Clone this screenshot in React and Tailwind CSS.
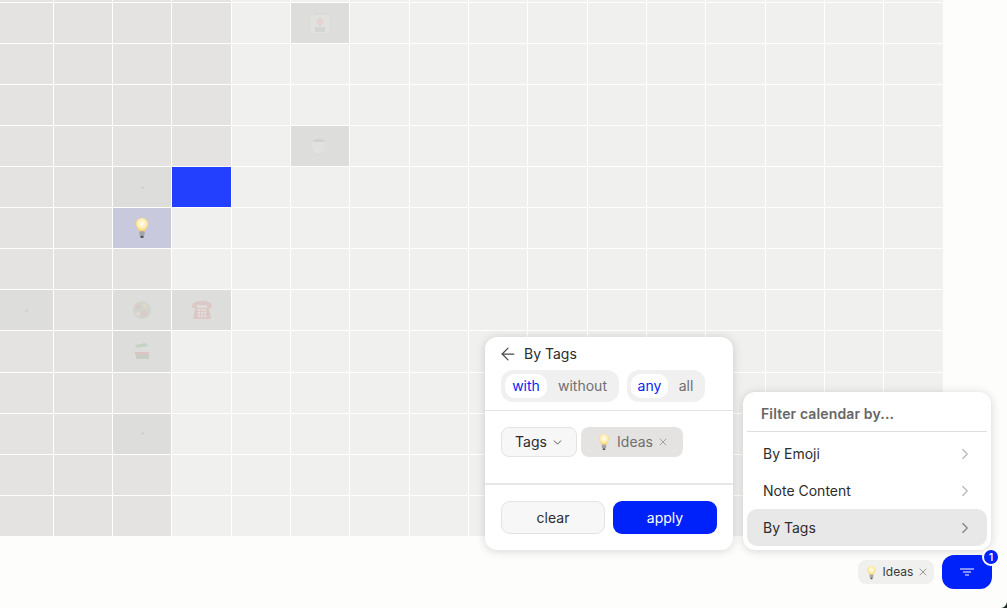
import React from 'react';
import { ArrowLeft, ChevronDown, ChevronRight, X } from 'lucide-react';

const BLANK = 0, DARK = 1, MARK = 2, BLUE = 3, BULB = 4;

const Bulb = ({ size = 20, className = '' }) => (
  <svg width={size} height={size} viewBox="0 0 20 20" className={className}>
    <defs>
      <radialGradient id="bulbGlow" cx="50%" cy="42%" r="55%">
        <stop offset="0%" stopColor="#fffdf0" />
        <stop offset="60%" stopColor="#fff0b8" />
        <stop offset="100%" stopColor="#f6cf6e" />
      </radialGradient>
    </defs>
    <path d="M10 1c-3.2 0-5.6 2.4-5.6 5.4 0 2.5 1.9 3.8 2.7 6.6h5.8c.8-2.8 2.7-4.1 2.7-6.6C15.600 3.400 13.200 1 10 1z" fill="url(#bulbGlow)" />
    <rect x="7.600" y="13" width="4.800" height="4" rx="0.800" fill="#a3a3a8" />
    <rect x="8.600" y="17" width="2.800" height="2" rx="0.600" fill="#55555c" />
  </svg>
);

const Kit = () => (
  <svg width="20" height="22" viewBox="0 0 20 22">
    <rect x="1" y="3" width="18" height="18" fill="#e1e1df" />
    <rect x="4" y="1" width="12" height="2" fill="#dadad8" />
    <path d="M8.500 6h3v2.500H14v3h-2.500V14h-3v-2.500H6v-3h2.500z" fill="#e6d2d1" />
    <rect x="5" y="15" width="10" height="5" fill="#d4d4d2" />
  </svg>
);

const Cup = () => (
  <svg width="20" height="16" viewBox="0 0 20 16">
    <ellipse cx="9" cy="3" rx="6" ry="2" fill="#d2d2d0" />
    <path d="M2 4h14v5c0 3-3 6-7 6s-7-3-7-6z" fill="#e1e1df" />
    <circle cx="16" cy="8" r="3" fill="#dfdfdd" />
  </svg>
);

const Dot = () => <span className="block size-[3px] rounded-full bg-[#d0d0ce]" />;

const Ball = () => (
  <svg width="20" height="20" viewBox="0 0 20 20" className="opacity-[0.14]">
    <circle cx="10" cy="10" r="9" fill="#8fa672" />
    <circle cx="6" cy="7" r="2.500" fill="#c9615c" />
    <circle cx="13" cy="6" r="2" fill="#e3c15a" />
    <circle cx="12" cy="13" r="3" fill="#c9615c" />
    <circle cx="6" cy="14" r="2" fill="#ded8c8" />
  </svg>
);

const Phone = () => (
  <svg width="22" height="22" viewBox="0 0 22 22" className="opacity-[0.14]">
    <path d="M1 7c0-3 4-5 10-5s10 2 10 5v2h-5V6H6v3H1z" fill="#d9534f" />
    <path d="M4 9h14l2 11H2z" fill="#d9534f" />
    <g fill="#f2f2f0">
      <rect x="7" y="10" width="2" height="2" /><rect x="10" y="10" width="2" height="2" /><rect x="13" y="10" width="2" height="2" />
      <rect x="7" y="13" width="2" height="2" /><rect x="10" y="13" width="2" height="2" /><rect x="13" y="13" width="2" height="2" />
      <rect x="7" y="16" width="2" height="2" /><rect x="10" y="16" width="2" height="2" /><rect x="13" y="16" width="2" height="2" />
    </g>
  </svg>
);

const Books = () => (
  <svg width="18" height="18" viewBox="0 0 18 18" className="opacity-[0.18]">
    <path d="M2 3l11-2 2 3L4 6z" fill="#5fa35f" />
    <path d="M2 7l13-1v3L3 10z" fill="#d9dbd6" />
    <rect x="2" y="10" width="14" height="3" fill="#c9615c" />
    <rect x="3" y="13" width="13" height="4" fill="#6d8f5f" />
  </svg>
);

// one row = one line of the calendar, col -> [kind, emoji]
const rows = [
  { 0: [DARK], 1: [DARK], 2: [DARK], 3: [DARK] },
  { 0: [DARK], 1: [DARK], 2: [DARK], 3: [DARK], 5: [MARK, <Kit />] },
  { 0: [DARK], 1: [DARK], 2: [DARK], 3: [DARK] },
  { 0: [DARK], 1: [DARK], 2: [DARK], 3: [DARK] },
  { 0: [DARK], 1: [DARK], 2: [DARK], 3: [DARK], 5: [MARK, <Cup />] },
  { 0: [DARK], 1: [DARK], 2: [MARK, <Dot />], 3: [BLUE] },
  { 0: [DARK], 1: [DARK], 2: [BULB, <Bulb size={22} />] },
  { 0: [DARK], 1: [DARK], 2: [DARK] },
  { 0: [MARK, <Dot />], 1: [DARK], 2: [MARK, <Ball />], 3: [MARK, <Phone />] },
  { 0: [DARK], 1: [DARK], 2: [MARK, <Books />] },
  { 0: [DARK], 1: [DARK], 2: [DARK] },
  { 0: [DARK], 1: [DARK], 2: [MARK, <Dot />] },
  { 0: [DARK], 1: [DARK], 2: [DARK] },
  { 0: [DARK], 1: [DARK], 2: [DARK] },
];

const kindClass = {
  [BLANK]: 'bg-[#f0f0ee]',
  [DARK]: 'bg-[#e4e3e1]',
  [MARK]: 'bg-[#dddddb]',
  [BLUE]: 'bg-[#2340ff]',
  [BULB]: 'bg-[#c9c9dd]',
};

const Segment = ({ active, other, activeWidth, className }) => (
  <div className={`flex h-[32px] items-center rounded-[12px] bg-[#f0f0f0] p-[4px] ${className}`}>
    <span className={`flex h-[24px] ${activeWidth} items-center justify-center rounded-[10px] bg-white text-[#0a23f5]`}>{active}</span>
    <span className="flex-1 pl-[3px] text-center text-[#6f6f6f]">{other}</span>
  </div>
);

const MenuRow = ({ label, selected }) => (
  <div className={`flex h-[37px] items-center justify-between rounded-[10px] pl-[16px] pr-[13px] text-[#2c2c2c] ${selected ? 'bg-[#e8e8e8]' : ''}`}>
    <span>{label}</span>
    <ChevronRight size={18} strokeWidth={1.5} className={selected ? 'text-[#7d7d7d]' : 'text-[#b5b5b5]'} />
  </div>
);

export default function App() {
  return (
    <div
      className="relative h-[608px] w-[1007px] overflow-hidden bg-[#fdfdfb] text-[14px] leading-[20px]"
      style={{ fontFamily: 'Inter, "Liberation Sans", sans-serif' }}
    >
      {/* calendar grid */}
      <div className="grid h-[535.95px] w-[942.8px] grid-cols-[52.8px_repeat(15,1fr)] grid-rows-[1.65px_repeat(13,1fr)] gap-px bg-white">
        {rows.map((row, r) =>
          Array.from({ length: 16 }, (_, c) => {
            const [kind, emoji] = row[c] || [BLANK];
            return (
              <div key={`${r}-${c}`} className={`flex items-center justify-center overflow-hidden ${kindClass[kind]}`}>
                {r > 0 && emoji}
              </div>
            );
          })
        )}
      </div>

      {/* popovers */}
      <div className="absolute bottom-[58px] right-[16px] flex items-end gap-[10px]">
        <div className="h-[213px] w-[248px] rounded-[12px] bg-white shadow-[0_1px_10px_rgba(0,0,0,0.16)]">
          <div className="flex h-[33px] items-center gap-[6px] pl-[13px] text-[#2c2c2c]">
            <ArrowLeft size={20} strokeWidth={1.5} className="text-[#4a4a4a]" />
            <span>By Tags</span>
          </div>
          <div className="flex gap-[8px] px-[16px]">
            <Segment active="with" other="without" activeWidth="w-[42px]" className="w-[118px]" />
            <Segment active="any" other="all" activeWidth="w-[37px]" className="w-[78px]" />
          </div>
          <div className="mt-[8px] h-px bg-[#e5e5e5]" />
          <div className="flex h-[74px] gap-[4px] border-b-2 border-[#e8e8e8] px-[16px] pt-[16px]">
            <div className="flex h-[30px] w-[76px] items-center justify-center gap-[4px] rounded-[8px] border border-[#e3e3e3] bg-[#f7f7f7] pl-[1px] text-[#2c2c2c]">
              Tags <ChevronDown size={13} strokeWidth={1.5} />
            </div>
            <div className="flex h-[30px] w-[102px] items-center justify-center gap-[4px] rounded-[8px] bg-[#e4e3e1] text-[#6f6f6f]">
              <Bulb size={18} /> Ideas <X size={12} strokeWidth={1.5} className="text-[#8a8a8a]" />
            </div>
          </div>
          <div className="flex gap-[8px] px-[16px] pt-[16px]">
            <div className="flex h-[33px] w-[104px] items-center justify-center rounded-[9px] border border-[#e3e3e3] bg-[#f7f7f7] text-[#2c2c2c]">clear</div>
            <div className="flex h-[33px] w-[104px] items-center justify-center rounded-[9px] bg-[#0022fa] text-white">apply</div>
          </div>
        </div>

        <div className="h-[158px] w-[248px] rounded-[12px] bg-white px-[4px] shadow-[0_1px_10px_rgba(0,0,0,0.16)]">
          <div className="flex h-[40px] items-center border-b border-[#dedede] px-[14px] pt-[4px] font-semibold tracking-[0.01em] text-[#666666]">
            Filter calendar by...
          </div>
          <div className="mt-[3px]">
            <MenuRow label="By Emoji" />
            <MenuRow label="Note Content" />
            <MenuRow label="By Tags" selected />
          </div>
        </div>
      </div>

      {/* active filter bar */}
      <div className="absolute bottom-[19px] right-[15px] flex items-end gap-[8px]">
        <div className="mb-[5px] flex h-[24px] w-[76px] items-center justify-center gap-[4px] rounded-[8px] bg-[#f0f0ee] pl-[1px] text-[12px] text-[#3a3a3a]">
          <Bulb size={15} /> Ideas <X size={12} strokeWidth={1.5} className="text-[#7a7a7a]" />
        </div>
        <div className="relative flex h-[34px] w-[50px] items-center justify-center rounded-[12px] bg-[#0022fa]">
          <svg width="14" height="8" viewBox="0 0 14 8" fill="none" stroke="white" strokeWidth="1.2">
            <path d="M0 1h14M3 4h8M5 7h4" />
          </svg>
          <span className="absolute -right-[8px] -top-[7px] flex size-[18px] items-center justify-center rounded-full border-2 border-white bg-[#0022fa] text-[11px] font-medium leading-none text-white">1</span>
        </div>
      </div>

      {/* rounded corner of the window */}
      <svg width="6" height="6" viewBox="0 0 6 6" className="absolute bottom-0 right-0">
        <path d="M6 0v6H0c3-.3 5.500-2.500 6-6z" fill="#1d2a25" />
      </svg>
    </div>
  );
}
